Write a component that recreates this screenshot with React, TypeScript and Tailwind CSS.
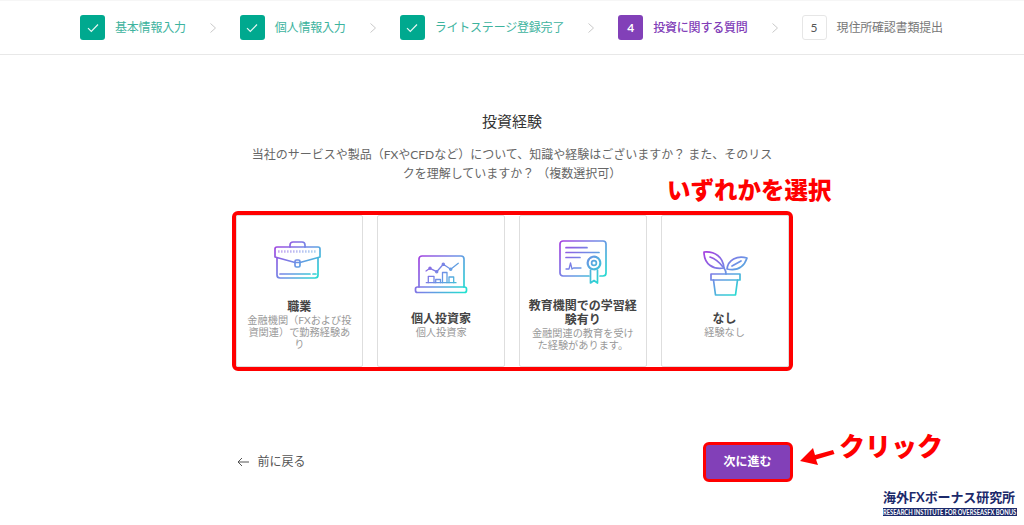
import React from "react";

const Grad = ({ id, x2 = 56, y2 = 44, x1 = 6, y1 = 2 }: { id: string; x1?: number; y1?: number; x2?: number; y2?: number }) => (
  <defs>
    <linearGradient id={id} gradientUnits="userSpaceOnUse" x1={x1} y1={y1} x2={x2} y2={y2}>
      <stop offset="0" stopColor="#a53fe0" />
      <stop offset="0.5" stopColor="#6f8fe6" />
      <stop offset="1" stopColor="#1fe3cf" />
    </linearGradient>
  </defs>
);

const Briefcase = () => (
  <svg width="60" height="60" viewBox="0 0 60 60" fill="none" stroke="url(#g1)" strokeWidth="1.7" strokeLinecap="round" strokeLinejoin="round" className="overflow-visible">
    <Grad id="g1" x1={6} y1={2} x2={50} y2={40} />
    <path d="M21 7V5a3 3 0 0 1 3-3h9a3 3 0 0 1 3 3v2" />
    <path d="M8 7h41a2 2 0 0 1 2 2v8l-20 5.500h-5L6 17V9a2 2 0 0 1 2-2z" />
    <path d="M8 18v17a3 3 0 0 0 3 3h35a3 3 0 0 0 3-3V18" />
    <rect x="26" y="20" width="5" height="7" rx="1.500" />
    <path d="M9.500 11.500H48" strokeDasharray="0.800 2.200" strokeWidth="2.400" strokeLinecap="butt" />
    <path d="M11 34H41M44 34H47" />
  </svg>
);

const Laptop = () => (
  <svg width="60" height="60" viewBox="0 0 60 60" fill="none" stroke="url(#g2)" strokeWidth="1.7" strokeLinecap="round" strokeLinejoin="round" className="overflow-visible">
    <Grad id="g2" x1={6} y1={4} x2={54} y2={42} />
    <path d="M8 35V7a3 3 0 0 1 3-3h39a3 3 0 0 1 3 3v28" />
    <rect x="4.500" y="35" width="51" height="5.500" rx="2" />
    <path d="M15 19l4-2.700 6.700 3.400 6.600-7.400 7.400 5 7.600-6" strokeWidth="1.300" />
    <circle cx="19" cy="16.300" r="1.100" strokeWidth="1.300" />
    <circle cx="25.700" cy="19.700" r="1.100" strokeWidth="1.300" />
    <circle cx="32.300" cy="12.300" r="1.100" strokeWidth="1.300" />
    <circle cx="39.700" cy="17.300" r="1.100" strokeWidth="1.300" />
    <path d="M15.300 30.700H45" strokeWidth="1.300" />
    <path d="M17.300 30.700V24.300H23V30.700M24.700 30.700V27.500H29.500V30.700M31.500 30.700V20.500H36V30.700M38 30.700V25H42.700V30.700" strokeWidth="1.300" />
  </svg>
);

const Certificate = () => (
  <svg width="60" height="60" viewBox="0 0 60 60" fill="none" stroke="url(#g3)" strokeWidth="1.7" strokeLinecap="round" strokeLinejoin="round" className="overflow-visible">
    <Grad id="g3" x1={7} y1={2} x2={52} y2={42} />
    <path d="M36 37H10a3 3 0 0 1-3-3V5a3 3 0 0 1 3-3h40a3 3 0 0 1 3 3v29a3 3 0 0 1-3 3h-3" />
    <path d="M13 8.700H34M13 13.500H46M13 18.500H27" />
    <path d="M13 30h3l1.500-6 1.500 6 1.500-1H28" strokeWidth="1.300" />
    <circle cx="41" cy="24" r="6.300" strokeDasharray="2.600 0.900" strokeWidth="2.200" />
    <circle cx="41" cy="24" r="2.400" />
    <path d="M37.500 31V44l3.500-2.500 3.500 2.500V31" />
  </svg>
);

const Plant = () => (
  <svg width="60" height="60" viewBox="0 0 60 60" fill="none" stroke="url(#g4)" strokeWidth="1.7" strokeLinecap="round" strokeLinejoin="round" className="overflow-visible">
    <Grad id="g4" x1={10} y1={0} x2={44} y2={44} />
    <path d="M9 0C20-1 28 5 29 16C18 18 9 12 9 0z" />
    <path d="M15 5C21 7 25 11 28 15" />
    <path d="M52 6C42 3 33 8 32 17C42 19 49 15 52 6z" />
    <path d="M37 14L46 9" />
    <path d="M29 16C30.500 18 31 20 31 22" />
    <rect x="16" y="22" width="29" height="6" />
    <path d="M18.500 28L20.500 43H40.500L42.500 28" />
  </svg>
);

const cards = [
  { icon: <Briefcase />, title: "職業", sub: "金融機関（FXおよび投資関連）で勤務経験あり" },
  { icon: <Laptop />, title: "個人投資家", sub: "個人投資家" },
  { icon: <Certificate />, title: "教育機関での学習経験有り", sub: "金融関連の教育を受けた経験があります。" },
  { icon: <Plant />, title: "なし", sub: "経験なし" },
];

const Chevron = () => (
  <svg width="6" height="10" viewBox="0 0 6 10" fill="none" stroke="#c9c9c9" strokeWidth="1" className="mx-[24px] shrink-0">
    <path d="M0.500 0.500L5.500 5L0.500 9.500" />
  </svg>
);

const Check = () => (
  <svg width="12" height="10" viewBox="0 0 12 10" fill="none" stroke="#e6f7f3" strokeWidth="1.200">
    <path d="M1 5.200L4.300 8.500L11 1.500" />
  </svg>
);

const DoneStep = ({ label }: { label: string }) => (
  <div className="flex items-center gap-[10px]">
    <div className="flex h-[25px] w-[25px] items-center justify-center rounded-[3px] bg-[#00a98f]">
      <Check />
    </div>
    <span className="whitespace-nowrap text-[12px] tracking-[-0.2px] text-[#3db39e]">{label}</span>
  </div>
);

export default function App() {
  return (
    <div className="relative h-[525px] w-[1024px] overflow-hidden bg-white font-[Lato,'Noto_Sans_CJK_JP',sans-serif]">
      <header className="flex h-[55px] items-center border-t border-b border-t-[#f6f6f6] border-b-[#e8e8e8] pl-[80px]">
        <DoneStep label="基本情報入力" />
        <Chevron />
        <DoneStep label="個人情報入力" />
        <Chevron />
        <DoneStep label="ライトステージ登録完了" />
        <Chevron />
        <div className="flex items-center gap-[10px]">
          <div className="flex h-[25px] w-[25px] items-center justify-center rounded-[3px] bg-[#8240b8] text-[12px] font-bold text-white">4</div>
          <span className="whitespace-nowrap text-[12px] font-medium tracking-[-0.2px] text-[#8240b8]">投資に関する質問</span>
        </div>
        <Chevron />
        <div className="flex items-center gap-[10px]">
          <div className="flex h-[25px] w-[25px] items-center justify-center rounded-[3px] border border-[#e6e6e6] text-[12px] text-[#555]">5</div>
          <span className="whitespace-nowrap text-[12px] tracking-[-0.2px] text-[#777]">現住所確認書類提出</span>
        </div>
      </header>

      <main className="flex flex-col items-center">
        <h1 className="mt-[55px] text-[15px] leading-[22px] font-normal text-[#333]">投資経験</h1>
        <p className="mt-[13px] w-[530px] text-center text-[12px] leading-[19px] text-[#666]">
          当社のサービスや製品（FXやCFDなど）について、知識や経験はございますか？ また、そのリスクを理解していますか？ （複数選択可）
        </p>
        <div className="mt-[28px] flex h-[160px] w-[561px] gap-[14px] rounded-[6px] border-4 border-[#ff0000]">
          {cards.map((c) => (
            <div key={c.title} className="flex flex-1 flex-col items-center justify-center rounded-[2px] border border-[#dedede] px-[8px] pt-[7px] text-center">
              <div className="h-[60px] w-[60px] shrink-0">{c.icon}</div>
              <div className="text-[12px] leading-[14px] font-bold text-[#444]">{c.title}</div>
              <div className="text-[10.2px] leading-[12px] text-[#999]">{c.sub}</div>
            </div>
          ))}
        </div>
        <div className="mt-[71px] flex w-[561px] items-center justify-between">
          <div className="ml-[5px] flex items-center gap-[7px] text-[12px] text-[#555]">
            <svg width="12" height="10" viewBox="0 0 12 10" fill="none" stroke="#555" strokeWidth="1">
              <path d="M12 5H1M5 1L1 5L5 9" />
            </svg>
            <span className="ml-[2px]">前に戻る</span>
          </div>
          <button className="flex h-[40px] w-[90px] items-center justify-center rounded-[6px] border-[3px] border-[#ff0000] bg-[#8240b8] text-[12px] font-bold text-white">
            次に進む
          </button>
        </div>
      </main>

      <div className="absolute top-[176px] left-[667px] text-[23.5px] leading-[28px] font-black whitespace-nowrap text-[#ff0000]">いずれかを選択</div>
      <div className="absolute top-[428px] left-[839px] text-[26px] leading-[36px] font-black whitespace-nowrap text-[#ff0000]">クリック</div>
      <svg className="absolute top-[445px] left-[798px]" width="40" height="24" viewBox="0 0 40 24" fill="#ff0000">
        <polygon points="2,16 15,3 17,10 35,5 36.500,9 18,14.500 20,20" />
      </svg>

      <div className="absolute top-[488px] left-[883px] flex w-[134px] flex-col">
        <div className="text-[13px] leading-[18px] font-bold tracking-[-0.1px] whitespace-nowrap text-[#1c2a6b]">海外FXボーナス研究所</div>
        <div className="mt-[2px] h-[8px] overflow-hidden bg-[#1c2a6b]">
          <div className="origin-left scale-x-[0.83] text-[7px] leading-[8px] font-bold whitespace-nowrap text-white">RESEARCH INSTITUTE FOR OVERSEASFX BONUS</div>
        </div>
      </div>
    </div>
  );
}
